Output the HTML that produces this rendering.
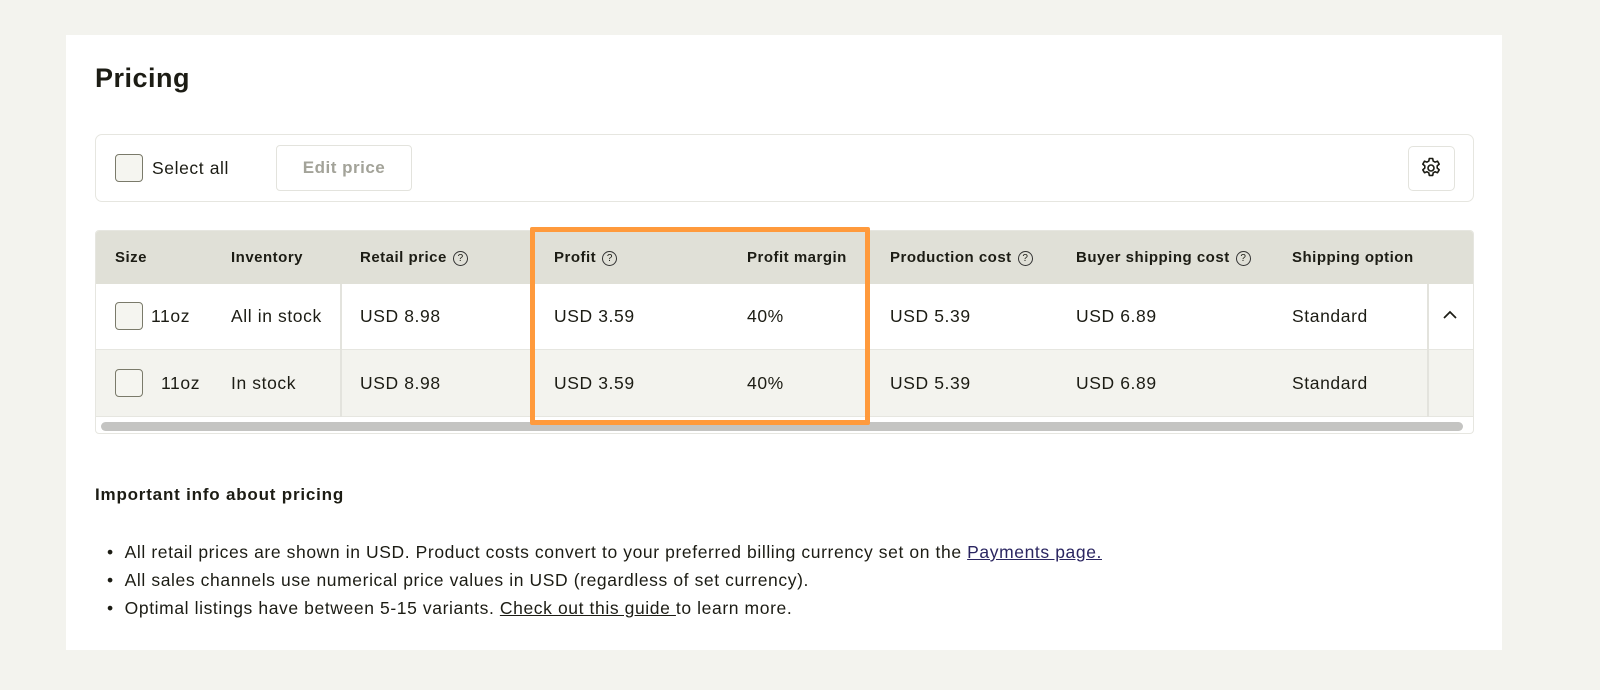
<!DOCTYPE html>
<html><head><style>
*{margin:0;padding:0;box-sizing:border-box}
body{width:1600px;height:690px;background:#f3f3ee;font-family:"Liberation Sans",sans-serif;color:#1c1c14;position:relative;overflow:hidden}
.card{position:absolute;left:66px;top:35px;width:1436px;height:615px;background:#fff}
.a{position:absolute;white-space:nowrap}
.cb{position:absolute;width:28px;height:28px;border:1.5px solid #7a7a6a;border-radius:4px;background:#f5f5f0}
.h{font-weight:bold;font-size:15px;top:249px;letter-spacing:0.5px}
.q{display:inline-block;width:15px;height:15px;border:1.3px solid #333;border-radius:50%;font-size:10px;text-align:center;line-height:13px;font-weight:normal;margin-left:6px;vertical-align:1px;letter-spacing:0}
.c{font-size:17.5px;letter-spacing:0.6px}
</style></head><body>
<div class="card"></div>
<div class="a" style="left:95px;top:63px;font-size:27px;font-weight:bold;letter-spacing:0.5px">Pricing</div>
<div class="a" style="left:95px;top:134px;width:1379px;height:68px;border:1.5px solid #e6e6e0;border-radius:7px"></div>
<div class="cb" style="left:115px;top:154px"></div>
<div class="a c" style="left:152px;top:158px">Select all</div>
<div class="a" style="left:276px;top:145px;width:136px;height:46px;border:1.5px solid #e3e3dd;border-radius:4px;color:#a3a399;font-weight:bold;font-size:17px;letter-spacing:0.5px;text-align:center;line-height:43px">Edit price</div>
<div class="a" style="left:1408px;top:146px;width:47px;height:45px;border:1.5px solid #e3e3dd;border-radius:5px"></div>
<svg class="a" style="left:1419px;top:156px" width="24" height="24" viewBox="0 0 24 24" fill="none" stroke="#1c1c14" stroke-width="1.6" stroke-linejoin="round"><path d="M10.3 2.5h3.4l.5 2.6 1.8 1 2.5-.9 1.7 2.9-2 1.8v2.1l2 1.8-1.7 2.9-2.5-.9-1.8 1-.5 2.6h-3.4l-.5-2.6-1.8-1-2.5.9-1.7-2.9 2-1.8v-2.1l-2-1.8 1.7-2.9 2.5.9 1.8-1z"/><circle cx="12" cy="12" r="3"/></svg>
<div class="a" style="left:95px;top:230px;width:1379px;height:204px;border:1px solid #e6e6e0;border-radius:4px;overflow:hidden">
<div class="a" style="left:0;top:0;width:1379px;height:53px;background:#e0e0d7"></div>
<div class="a" style="left:0;top:53px;width:1379px;height:66px;background:#fff;border-bottom:1.5px solid #e6e6e0"></div>
<div class="a" style="left:0;top:119px;width:1379px;height:67px;background:#f3f3ee;border-bottom:1.5px solid #e6e6e0"></div>
<div class="a" style="left:244px;top:53px;width:2px;height:133px;background:#e3e3dd"></div>
<div class="a" style="left:1331px;top:53px;width:2px;height:133px;background:#e3e3dd"></div>
<div class="a" style="left:5px;top:191px;width:1362px;height:9px;border-radius:5px;background:#c4c4c2"></div>
</div>
<div class="a h" style="left:115px">Size</div>
<div class="a h" style="left:231px">Inventory</div>
<div class="a h" style="left:360px">Retail price<span class="q">?</span></div>
<div class="a h" style="left:554px">Profit<span class="q">?</span></div>
<div class="a h" style="left:747px">Profit margin</div>
<div class="a h" style="left:890px">Production cost<span class="q">?</span></div>
<div class="a h" style="left:1076px">Buyer shipping cost<span class="q">?</span></div>
<div class="a h" style="left:1292px">Shipping option</div>
<div class="cb" style="left:115px;top:302px"></div>
<div class="cb" style="left:115px;top:369px"></div>
<div class="a c" style="left:151px;top:306px">11oz</div>
<div class="a c" style="left:231px;top:306px">All in stock</div>
<div class="a c" style="left:360px;top:306px">USD 8.98</div>
<div class="a c" style="left:554px;top:306px">USD 3.59</div>
<div class="a c" style="left:747px;top:306px">40%</div>
<div class="a c" style="left:890px;top:306px">USD 5.39</div>
<div class="a c" style="left:1076px;top:306px">USD 6.89</div>
<div class="a c" style="left:1292px;top:306px">Standard</div>
<svg class="a" style="left:1442px;top:309px" width="16" height="12" viewBox="0 0 16 12"><path d="M2 9l6-6 6 6" fill="none" stroke="#1c1c14" stroke-width="1.7"/></svg>
<div class="a c" style="left:161px;top:373px">11oz</div>
<div class="a c" style="left:231px;top:373px">In stock</div>
<div class="a c" style="left:360px;top:373px">USD 8.98</div>
<div class="a c" style="left:554px;top:373px">USD 3.59</div>
<div class="a c" style="left:747px;top:373px">40%</div>
<div class="a c" style="left:890px;top:373px">USD 5.39</div>
<div class="a c" style="left:1076px;top:373px">USD 6.89</div>
<div class="a c" style="left:1292px;top:373px">Standard</div>
<div class="a" style="left:530px;top:227px;width:340px;height:198px;border:5px solid #ff9a3c;border-radius:2px"></div>
<div class="a" style="left:95px;top:485px;font-size:17px;font-weight:bold;letter-spacing:0.8px">Important info about pricing</div>
<div class="a c" style="left:107px;top:538px;line-height:28px">
• &nbsp;All retail prices are shown in USD. Product costs convert to your preferred billing currency set on the <u style="color:#2a2560">Payments page.</u><br>
• &nbsp;All sales channels use numerical price values in USD (regardless of set currency).<br>
• &nbsp;Optimal listings have between 5-15 variants. <u>Check out this guide </u>to learn more.
</div>
</body></html>
